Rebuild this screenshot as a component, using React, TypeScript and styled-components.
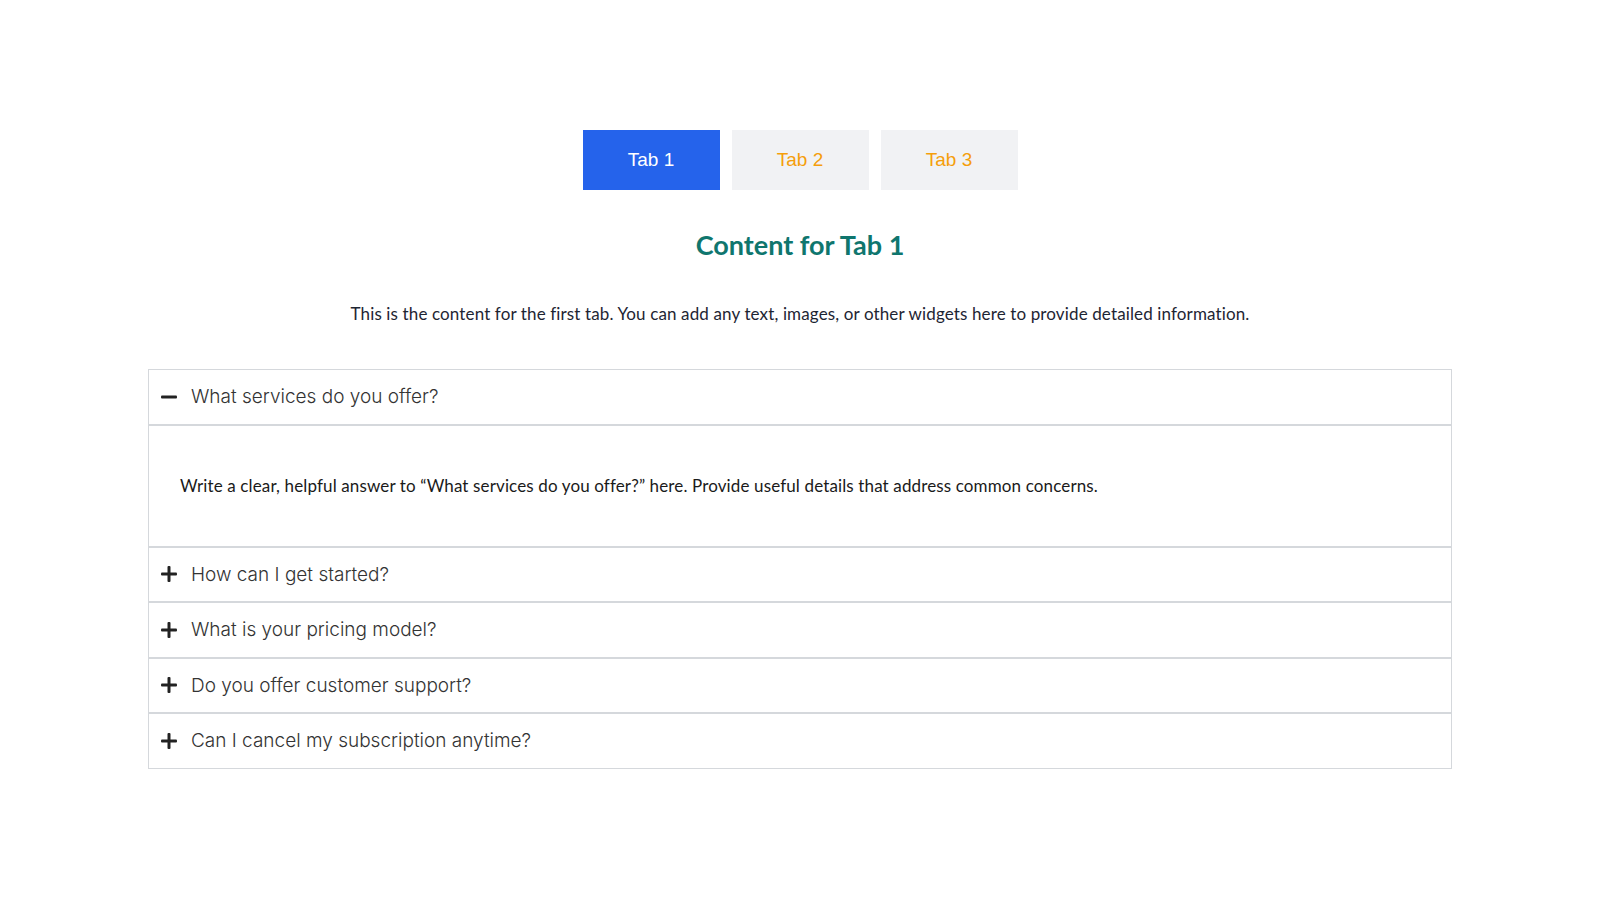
import { useState } from "react";
import styled, { createGlobalStyle } from "styled-components";

const GlobalStyle = createGlobalStyle`
  html, body {
    margin: 0;
    padding: 0;
    background: #ffffff;
  }
  * {
    box-sizing: border-box;
  }
`;

type FaqItem = {
  question: string;
};

const faqs: FaqItem[] = [
  { question: "What services do you offer?" },
  { question: "How can I get started?" },
  { question: "What is your pricing model?" },
  { question: "Do you offer customer support?" },
  { question: "Can I cancel my subscription anytime?" },
];

const tabs = [
  {
    label: "Tab 1",
    title: "Content for Tab 1",
    text: "This is the content for the first tab. You can add any text, images, or other widgets here to provide detailed information.",
  },
  {
    label: "Tab 2",
    title: "Content for Tab 2",
    text: "This is the content for the second tab. You can add any text, images, or other widgets here to provide detailed information.",
  },
  {
    label: "Tab 3",
    title: "Content for Tab 3",
    text: "This is the content for the third tab. You can add any text, images, or other widgets here to provide detailed information.",
  },
];

const MinusIcon = () => (
  <svg width="16" height="16" viewBox="0 0 16 16" aria-hidden="true">
    <rect x="0" y="6.5" width="16" height="3" rx="1" fill="#222222" />
  </svg>
);

const PlusIcon = () => (
  <svg width="16" height="16" viewBox="0 0 16 16" aria-hidden="true">
    <rect x="0" y="6.5" width="16" height="3" rx="1" fill="#222222" />
    <rect x="6.5" y="0" width="3" height="16" rx="1" fill="#222222" />
  </svg>
);

const App = () => {
  const [activeTab, setActiveTab] = useState(0);
  const [openItem, setOpenItem] = useState<number | null>(0);
  const current = tabs[activeTab];

  return (
    <>
      <GlobalStyle />
      <Page>
        <TabBar>
          {tabs.map((tab, index) => (
            <TabButton
              key={tab.label}
              $active={index === activeTab}
              onClick={() => setActiveTab(index)}
            >
              {tab.label}
            </TabButton>
          ))}
        </TabBar>

        <Heading>{current.title}</Heading>
        <Intro>{current.text}</Intro>

        <Accordion>
          {faqs.map((item, index) => {
            const isOpen = openItem === index;
            return (
              <Item key={item.question}>
                <ItemTitle
                  $open={isOpen}
                  onClick={() => setOpenItem(isOpen ? null : index)}
                >
                  <IconSlot>{isOpen ? <MinusIcon /> : <PlusIcon />}</IconSlot>
                  {item.question}
                </ItemTitle>
                {isOpen && (
                  <ItemContent>
                    Write a clear, helpful answer to “{item.question}” here.
                    Provide useful details that address common concerns.
                  </ItemContent>
                )}
              </Item>
            );
          })}
        </Accordion>
      </Page>
    </>
  );
};

const Page = styled.div`
  width: 1304px;
  margin: 0 auto;
  padding-top: 130px;
  display: flex;
  flex-direction: column;
  align-items: center;
`;

const TabBar = styled.div`
  display: flex;
  gap: 12px;
`;

const TabButton = styled.button<{ $active: boolean }>`
  width: 137px;
  height: 60px;
  border: none;
  cursor: pointer;
  font-family: "Liberation Sans", Arial, sans-serif;
  font-size: 19px;
  background: ${(p) => (p.$active ? "#2563eb" : "#f1f2f4")};
  color: ${(p) => (p.$active ? "#ffffff" : "#f59e0b")};
`;

const Heading = styled.h2`
  margin: 36px 0 0;
  font-family: Lato, "Noto Sans", sans-serif;
  font-weight: 700;
  font-size: 27px;
  line-height: 38px;
  color: #0f766e;
`;

const Intro = styled.p`
  margin: 38px 0 0;
  font-family: Lato, "Noto Sans", sans-serif;
  font-size: 17px;
  letter-spacing: 0.13px;
  line-height: 24px;
  color: #1e2533;
  text-align: center;
`;

const Accordion = styled.div`
  width: 100%;
  margin-top: 43px;
  display: flex;
  flex-direction: column;
`;

const Item = styled.div`
  border: 1px solid #d5d8dc;
`;

const ItemTitle = styled.div<{ $open: boolean }>`
  display: flex;
  align-items: center;
  gap: 14px;
  padding: 15px 12px;
  font-family: Inter, "Noto Sans", sans-serif;
  font-weight: 300;
  font-size: 19px;
  line-height: 23.5px;
  color: #333333;
  cursor: pointer;
  border-bottom: ${(p) => (p.$open ? "1px solid #d5d8dc" : "none")};
`;

const IconSlot = styled.span`
  display: flex;
  width: 16px;
  height: 16px;
`;

const ItemContent = styled.div`
  border-top: 1px solid #d5d8dc;
  padding: 48px 31px;
  font-family: Lato, "Noto Sans", sans-serif;
  font-size: 17px;
  letter-spacing: 0.13px;
  line-height: 24px;
  color: #1a1a1a;
`;

export default App;
